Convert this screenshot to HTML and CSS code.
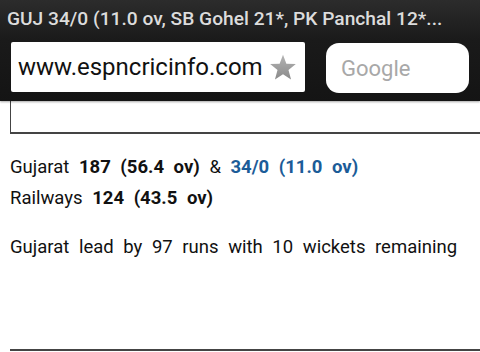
FILE: index.html
```html
<!DOCTYPE html>
<html>
<head>
<meta charset="utf-8">
<link rel="stylesheet" href="styles.css">
</head>
<body>
<div class="bar">
  <div class="title">GUJ 34/0 (11.0 ov, SB Gohel 21*, PK Panchal 12*...</div>
  <div class="fields">
    <div class="url">
      <span class="url-text">www.espncricinfo.com</span>
      <svg class="star" width="28" height="27" viewBox="0 0 24 23">
        <defs>
          <linearGradient id="sg" x1="0" y1="0" x2="0" y2="1">
            <stop offset="0" stop-color="#b4b4b4"/>
            <stop offset="1" stop-color="#8a8a8a"/>
          </linearGradient>
        </defs>
        <polygon points="12,0.5 14.9,8.2 23,8.6 16.7,13.7 18.9,21.8 12,17.2 5.1,21.8 7.3,13.7 1,8.6 9.1,8.2" fill="url(#sg)"/>
      </svg>
    </div>
    <div class="search">Google</div>
  </div>
</div>
<div class="content">
  <div class="box"></div>
  <p class="line first">Gujarat <b>187 (56.4 ov)</b> &amp; <b class="blue">34/0 (11.0 ov)</b></p>
  <p class="line">Railways <b>124 (43.5 ov)</b></p>
  <p class="line status">Gujarat lead by 97 runs with 10 wickets remaining</p>
  <div class="bottom"></div>
</div>
</body>
</html>
```
FILE: styles.css
```css
html, body {
  margin: 0;
  padding: 0;
  background: #fff;
  overflow: hidden;
}
body {
  width: 480px;
  height: 352px;
  font-family: Roboto, "Liberation Sans", sans-serif;
}
.bar {
  height: 101px;
  background: linear-gradient(#2c2c2c, #1a1a1a 40%, #141414);
  box-shadow: 0 1px 2px rgba(0,0,0,0.35);
  position: relative;
  z-index: 1;
}
.title {
  color: #dcdcdc;
  font-size: 19.2px;
  font-weight: 500;
  padding: 7px 0 0 7px;
  height: 36px;
  box-sizing: border-box;
  white-space: nowrap;
}
.fields {
  display: flex;
  padding: 6px 0 0 11px;
  gap: 21px;
}
.url {
  width: 294px;
  height: 50px;
  background: #fff;
  border-radius: 2px;
  display: flex;
  align-items: center;
  box-sizing: border-box;
  padding-left: 7px;
}
.url-text {
  font-size: 24px;
  color: #111;
}
.star {
  margin-left: 6px;
}
.search {
  width: 143px;
  height: 50px;
  margin-top: 1px;
  background: #fff;
  border-radius: 13px;
  box-sizing: border-box;
  padding-left: 15px;
  display: flex;
  align-items: center;
  font-size: 22px;
  color: #a8a8a8;
}
.content {
  padding-left: 10px;
}
.box {
  height: 33px;
  border-left: 1px solid #444;
  border-bottom: 2px solid #444;
  box-sizing: border-box;
}
.line {
  margin: 0;
  font-size: 18.5px;
  color: #111;
  word-spacing: 5px;
  line-height: 31px;
}
.line.first {
  margin-top: 18px;
}
.line b {
  font-weight: 700;
}
.blue {
  color: #1b5c98;
}
.status {
  margin-top: 18px;
}
.bottom {
  margin-top: 86px;
  border-top: 2px solid #444;
}
```
